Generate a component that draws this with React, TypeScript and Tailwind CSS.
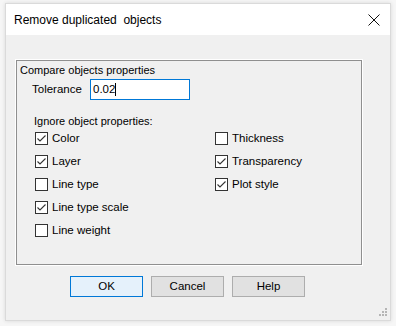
import React from 'react';

const FONT = { fontFamily: '"Liberation Sans", Arial, sans-serif' };

const LEFT_ITEMS = [
  { label: 'Color', checked: true },
  { label: 'Layer', checked: true },
  { label: 'Line type', checked: false },
  { label: 'Line type scale', checked: true },
  { label: 'Line weight', checked: false },
];

const RIGHT_ITEMS = [
  { label: 'Thickness', checked: false },
  { label: 'Transparency', checked: true },
  { label: 'Plot style', checked: true },
];

function CheckBox({ label, checked }: { label: string; checked: boolean }) {
  return (
    <div className="flex items-center h-[13px]">
      <div className="w-[13px] h-[13px] border border-[#333333] bg-white flex items-center justify-center shrink-0">
        {checked && (
          <svg width="11" height="11" viewBox="0 0 11 11">
            <path d="M1.5 5.5 L4 8 L9.5 2.5" fill="none" stroke="#333333" strokeWidth="1.1" />
          </svg>
        )}
      </div>
      <span className="ml-[4px] text-[11.5px] leading-[13px] text-black whitespace-nowrap">{label}</span>
    </div>
  );
}

function Button({ children, primary }: { children: React.ReactNode; primary?: boolean }) {
  return (
    <div
      className={
        primary
          ? 'w-[73px] h-[21px] border border-[#0078d7] bg-[#e5f1fb] flex items-center justify-center text-[11.5px] text-black'
          : 'w-[73px] h-[21px] border border-[#adadad] bg-[#e1e1e1] flex items-center justify-center text-[11.5px] text-black'
      }
    >
      {children}
    </div>
  );
}

export default function App() {
  return (
    <div className="w-[396px] h-[326px] bg-[#f6f6f6] pt-[3px] pl-[5px]" style={FONT}>
      <div className="relative w-[386px] h-[318px] bg-[#f0f0f0] border border-[#dadada] shadow-[0_0_4px_rgba(0,0,0,0.12)] flex flex-col">
        {/* Title bar */}
        <div className="h-[31px] bg-white flex items-center justify-between pl-[8px] pr-[10px]">
          <span className="text-[12px] text-black whitespace-pre">Remove duplicated  objects</span>
          <svg width="12" height="12" viewBox="0 0 12 12">
            <path d="M0.5 0.5 L11.5 11.5 M11.5 0.5 L0.5 11.5" stroke="#111111" strokeWidth="1" />
          </svg>
        </div>

        {/* Body */}
        <div className="flex-1 pl-[10px] pt-[25px]">
          <div className="w-[346px] h-[205px] border border-[#8f8f8f] shadow-[0_0_0_1px_#ffffff]">
            <div className="pl-[3px] pt-[2px] text-[11px] leading-[14px] text-black">Compare objects properties</div>

            <div className="flex items-center pl-[15px] mt-[2px]">
              <span className="w-[58px] text-[11.5px] text-black">Tolerance</span>
              <div className="w-[100px] h-[21px] border border-[#0078d7] bg-white flex items-center pl-[2px]">
                <span className="text-[11.5px] text-black">0.02</span>
                <span className="w-px h-[13px] bg-black" />
              </div>
            </div>

            <div className="pl-[17px] mt-[14px] text-[11px] leading-[14px] text-black">Ignore object properties:</div>

            <div className="flex pl-[18px] mt-[4px]">
              <div className="w-[180px] flex flex-col gap-[10px]">
                {LEFT_ITEMS.map((it) => (
                  <CheckBox key={it.label} label={it.label} checked={it.checked} />
                ))}
              </div>
              <div className="flex flex-col gap-[10px]">
                {RIGHT_ITEMS.map((it) => (
                  <CheckBox key={it.label} label={it.label} checked={it.checked} />
                ))}
              </div>
            </div>
          </div>

          {/* Buttons */}
          <div className="flex gap-[8px] ml-[54px] mt-[11px]">
            <Button primary>OK</Button>
            <Button>Cancel</Button>
            <Button>Help</Button>
          </div>
        </div>

        {/* Size grip */}
        <svg className="absolute right-[3px] bottom-[4px]" width="8" height="8" viewBox="0 0 8 8">
          <rect x="6" y="0" width="2" height="2" fill="#b5b5b5" />
          <rect x="3" y="3" width="2" height="2" fill="#b5b5b5" />
          <rect x="6" y="3" width="2" height="2" fill="#b5b5b5" />
          <rect x="0" y="6" width="2" height="2" fill="#b5b5b5" />
          <rect x="3" y="6" width="2" height="2" fill="#b5b5b5" />
          <rect x="6" y="6" width="2" height="2" fill="#b5b5b5" />
        </svg>
      </div>
    </div>
  );
}
